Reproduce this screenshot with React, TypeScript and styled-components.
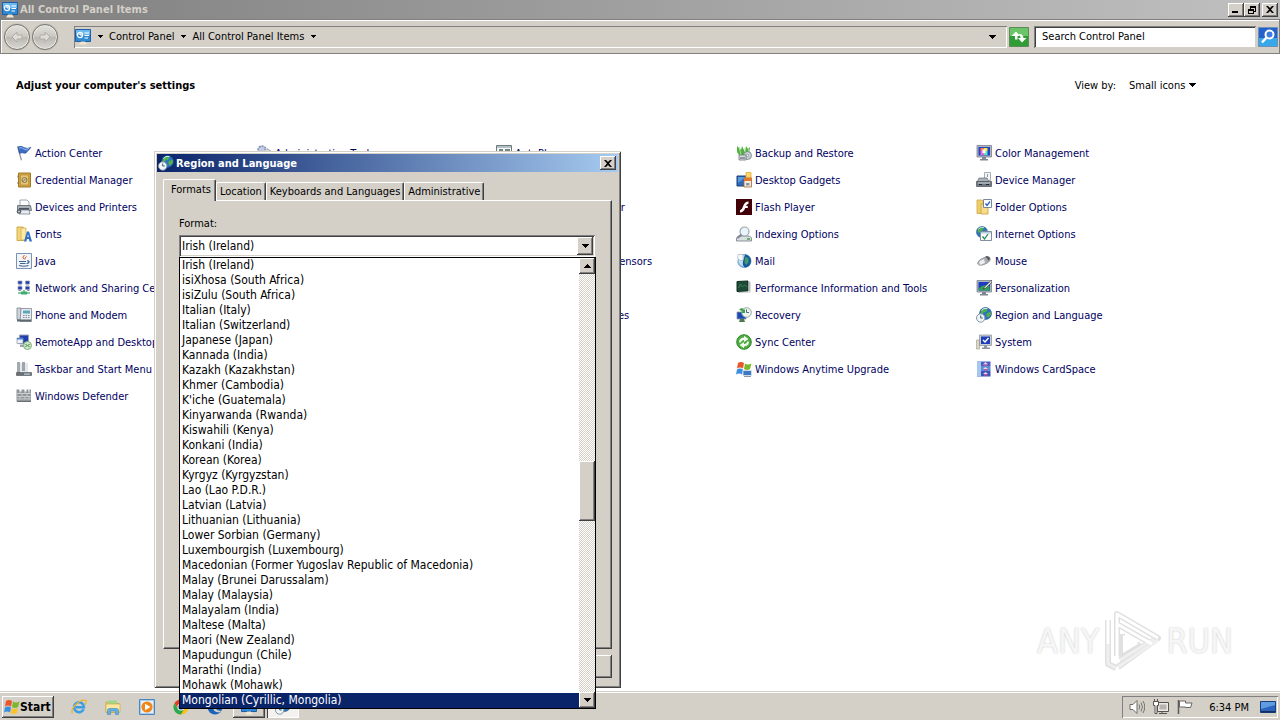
import React from "react";
import styled, { createGlobalStyle, css } from "styled-components";

const face = "#d4d0c8";
const link = "#00005f";
const sans = `"DejaVu Sans Condensed", "Noto Sans", sans-serif`;

const raised = css`
  background: ${face};
  border: 0;
  box-shadow: inset -1px -1px #404040, inset 1px 1px #fff, inset -2px -2px #808080;
`;
const sunken = css`
  box-shadow: inset 1px 1px #808080, inset -1px -1px #fff;
`;

const GlobalStyle = createGlobalStyle`
  *, *::before, *::after { box-sizing: border-box; }
  body { margin: 0; overflow: hidden; background: #fff; }
  body, button, input, select { font: 11px/15px ${sans}; color: #000; }
  svg { display: block; flex: none; }
  ul, h1, h2 { margin: 0; padding: 0; list-style: none; }
`;

const Desktop = styled.div`
  position: relative;
  display: flex;
  flex-direction: column;
  min-height: 100vh;
`;

const Window = styled.main`
  flex: 1;
  display: flex;
  flex-direction: column;
`;

const TitleBar = styled.header<{ $active?: boolean }>`
  display: flex;
  align-items: center;
  gap: 2px;
  height: ${(p) => (p.$active ? 18 : 19)}px;
  padding: ${(p) => (p.$active ? "0 2px 0 1px" : "0 2px")};
  color: ${(p) => (p.$active ? "#fff" : face)};
  background: ${(p) =>
    p.$active
      ? "linear-gradient(90deg, #0a246a, #a6caf0)"
      : "linear-gradient(90deg, #808080, #c0c0c0)"};
`;

const Title = styled.h1`
  flex: 1;
  font: bold 11px/15px ${sans};
`;

const CaptionButton = styled.button<{ $gap?: boolean }>`
  ${raised}
  display: grid;
  place-items: center;
  width: 16px;
  height: 14px;
  padding: 0;
  margin-left: ${(p) => (p.$gap ? 0 : -2)}px;
`;

const ToolBar = styled.nav`
  display: flex;
  align-items: center;
  height: 35px;
  padding: 0 1px 0 3px;
  background: ${face};
  border: 1px solid #808080;
  box-shadow: inset 1px 1px #fff;
`;

const RoundButton = styled.button`
  display: grid;
  place-items: center;
  width: 26px;
  height: 26px;
  margin-right: 2px;
  padding: 0;
  border: 1px solid #77746e;
  border-radius: 50%;
  background: linear-gradient(#e4e2de, #c9c6c0 50%, #bab7b1 52%, #dad8d4);
  box-shadow: inset 0 0 0 1px #eceae6, 0 0 1px #8a8781;
`;

const AddressBar = styled.div`
  ${sunken}
  flex: 1;
  display: flex;
  align-items: center;
  height: 22px;
  margin: 0 2px 0 14px;
  padding: 0 6px 0 1px;
`;

const Crumb = styled.button`
  padding: 0;
  border: 0;
  background: none;
`;

const CrumbArrow = styled.span`
  display: grid;
  place-items: center;
  width: 18px;
`;

const Spacer = styled.span`
  flex: 1;
`;

const IconButton = styled.button`
  width: 20px;
  height: 20px;
  padding: 0;
  border: 0;
  background: none;
`;

const SearchInput = styled.input`
  width: 222px;
  height: 22px;
  margin: 0 2px 0 5px;
  padding: 0 8px;
  border: 0;
  outline: 0;
  border-radius: 0;
  background: #fff;
  box-shadow: inset 1px 1px #808080, inset -1px -1px #d4d0c8, inset 2px 2px #404040;
  &::placeholder { color: #000; opacity: 1; }
`;

const Content = styled.section`
  flex: 1;
  padding: 23px 0 0 16px;
  background: #fff;
`;

const ContentHeader = styled.div`
  display: flex;
  align-items: center;
  height: 16px;
  margin-bottom: 47px;
  padding-right: 84px;
`;

const Heading = styled.h2`
  flex: 1;
  font: bold 11px/15px ${sans};
`;

const ViewBy = styled.label`
  display: flex;
  align-items: center;
  gap: 13px;
`;

const ViewPicker = styled.span`
  display: flex;
  align-items: center;
`;

const ViewSelect = styled.select`
  appearance: none;
  width: 60px;
  padding: 0;
  border: 0;
  background: none;
`;

const ItemGrid = styled.ul`
  display: grid;
  grid-template-columns: repeat(auto-fill, 240px);
  grid-auto-rows: 27px;
`;

const ItemLink = styled.a`
  display: inline-flex;
  align-items: center;
  gap: 3px;
  height: 27px;
  padding-bottom: 1px;
  color: ${link};
  text-decoration: none;
  white-space: nowrap;
`;

const Dialog = styled.section`
  position: absolute;
  left: 154px;
  top: 151px;
  display: flex;
  flex-direction: column;
  width: 467px;
  height: 537px;
  padding: 3px;
  background: ${face};
  box-shadow: inset 1px 1px #d4d0c8, inset -1px -1px #404040, inset 2px 2px #fff,
    inset -2px -2px #808080;
`;

const DialogBody = styled.div`
  flex: 1;
  display: flex;
  flex-direction: column;
  padding: 7px 6px 7px 6px;
`;

const TabRow = styled.div`
  display: flex;
  align-items: flex-end;
  height: 21px;
`;

const Tab = styled.button<{ $selected?: boolean }>`
  position: relative;
  height: ${(p) => (p.$selected ? 22 : 18)}px;
  padding: ${(p) => (p.$selected ? "0 4px 2px 7px" : "0 3px")};
  border: solid;
  border-width: 1px 1px 0 1px;
  border-color: #fff #404040 #fff #fff;
  border-radius: 2px 2px 0 0;
  background: ${face};
  margin-bottom: ${(p) => (p.$selected ? -1 : 0)}px;
  box-shadow: inset -1px 0 #808080;
  z-index: ${(p) => (p.$selected ? 1 : 0)};
  white-space: nowrap;
`;

const TabPanel = styled.div`
  flex: 1;
  padding: 15px 16px 15px 15px;
  border: solid;
  border-width: 1px;
  border-color: #fff #404040 #404040 #fff;
  box-shadow: inset -1px -1px #808080;
`;

const FieldLabel = styled.label`
  display: block;
  margin-bottom: 4px;
`;

const Combo = styled.div`
  position: relative;
  display: flex;
  align-items: center;
  height: 22px;
  padding: 2px;
  background: #fff;
  box-shadow: inset 1px 1px #808080, inset -1px -1px #fff, inset 2px 2px #404040,
    inset -2px -2px #d4d0c8;
`;

const ComboSelect = styled.select`
  appearance: none;
  flex: 1;
  height: 18px;
  padding: 0 1px;
  border: 0;
  outline: 0;
  background: #fff;
  font-size: 12px;
`;

const ArrowButton = styled.button<{ $h?: number }>`
  ${raised}
  display: grid;
  place-items: center;
  flex: none;
  width: 16px;
  height: ${(p) => p.$h ?? 16}px;
  padding: 0;
`;

const DropList = styled.div`
  position: absolute;
  top: 22px;
  left: 0;
  right: -1px;
  display: flex;
  border: 1px solid #000;
  background: #fff;
  z-index: 2;
`;

const Options = styled.ul`
  flex: 1;
  font-size: 12px;
`;

const Option = styled.li<{ $selected?: boolean }>`
  height: 15px;
  padding-left: 2px;
  white-space: nowrap;
  color: ${(p) => (p.$selected ? "#fff" : "#000")};
  background: ${(p) => (p.$selected ? "#0a246a" : "transparent")};
`;

const ScrollTrack = styled.div`
  display: flex;
  flex-direction: column;
  width: 16px;
  background: repeating-conic-gradient(#fff 0 25%, #d4d0c8 0 50%) 0 0 / 2px 2px;
`;

const TrackSpace = styled.div<{ $grow: number }>`
  flex: ${(p) => p.$grow} 0 0;
`;

const ScrollThumb = styled.div`
  ${raised}
  height: 60px;
`;

const DialogButtons = styled.div`
  display: flex;
  justify-content: flex-end;
  gap: 6px;
  margin-top: 6px;
`;

const DialogButton = styled.button`
  ${raised}
  width: 75px;
  height: 23px;
`;

const TaskBar = styled.footer`
  display: flex;
  align-items: center;
  height: 28px;
  padding: 1px 2px 0;
  background: ${face};
  border-top: 1px solid #fff;
  box-shadow: 0 -1px ${face};
`;

const StartButton = styled.button`
  ${raised}
  display: flex;
  align-items: center;
  width: 52px;
  height: 22px;
  padding: 0 2px;
  font: bold 12px/15px ${sans};
`;

const QuickLaunch = styled.div`
  display: flex;
  gap: 18px;
  margin: 0 10px 0 17px;
`;

const LaunchButton = styled.button`
  width: 16px;
  height: 16px;
  padding: 0;
  border: 0;
  background: none;
`;

const TaskButton = styled.button<{ $pressed?: boolean }>`
  ${raised}
  display: grid;
  place-items: center;
  width: 32px;
  height: 22px;
  margin-right: 2px;
  padding: 0;
  ${(p) =>
    p.$pressed &&
    css`
      background: #f4f2ee;
      box-shadow: inset 1px 1px #404040, inset -1px -1px #fff;
    `}
`;

const Tray = styled.div`
  ${sunken}
  display: flex;
  align-items: center;
  gap: 8px;
  height: 22px;
  padding: 0 2px 0 7px;
`;

const Clock = styled.time`
  margin: 0 3px 0 8px;
`;

const Watermark = styled.div`
  position: absolute;
  right: 47px;
  bottom: 48px;
  display: flex;
  align-items: center;
  gap: 5px;
  height: 62px;
  font: 34px/62px ${sans};
  color: #f6f6f6;
  text-shadow: 0 0 2px #c4c4c4;
  pointer-events: none;
`;

const Down = ({ small }: { small?: boolean }) =>
  small ? (
    <svg width="5" height="3" viewBox="0 0 5 3" shapeRendering="crispEdges">
      <path d="M0 0h5v1H0zM1 1h3v1H1zM2 2h1v1H2z" />
    </svg>
  ) : (
    <svg width="7" height="4" viewBox="0 0 7 4" shapeRendering="crispEdges">
      <path d="M0 0h7v1H0zM1 1h5v1H1zM2 2h3v1H2zM3 3h1v1H3z" />
    </svg>
  );
const Up = () => (
  <svg width="7" height="4" viewBox="0 0 7 4" shapeRendering="crispEdges">
    <path d="M0 3h7v1H0zM1 2h5v1H1zM2 1h3v1H2zM3 0h1v1H3z" />
  </svg>
);
const CloseMark = () => (
  <svg width="8" height="7" viewBox="0 0 8 7">
    <path d="M0 0h2l2 2 2-2h2L5 3.500 8 7H6L4 5 2 7H0l3-3.500z" />
  </svg>
);

const Globe = ({ x = 8, y = 8, r = 6 }: { x?: number; y?: number; r?: number }) => (
  <g transform={`translate(${x} ${y}) scale(${r / 6})`}>
    <circle r="6" fill="#2a74c0" stroke="#17477e" strokeWidth=".6" />
    <path d="M-4-4Q-1-6 2-5L1-2-2-1-3 1-5 0zM1 0l4-2 .5 3L3 4 1 3z" fill="#54b04c" />
    <path d="M-4-3Q-2-6 2-5" stroke="#c6e6fa" fill="none" />
  </g>
);
const Monitor = ({ fill = "#1c48b8", children }: { fill?: string; children?: React.ReactNode }) => (
  <>
    <path d="M1 .5h14.500v11.500H1z" fill="#aeb6bf" stroke="#79828d" strokeWidth=".8" />
    <path d="M2.500 2h11.500v8.500H2.500z" fill={fill} />
    {children}
    <path d="M6 12h4v2h2v1.500H4V14h2z" fill="#7f8891" />
  </>
);
const MiniClock = ({ x, y }: { x: number; y: number }) => (
  <g transform={`translate(${x} ${y})`}>
    <circle r="4.200" fill="#f1f5f8" stroke="#8395a8" />
    <path d="M0-2.500V0h2" fill="none" stroke="#3a5878" />
  </g>
);
const FlagPanes = () => (
  <>
    <path d="M2 2q3-2 6 0L7 7.500Q4 5.500 1 7.500z" fill="#e8562a" />
    <path d="M9 2.500q3 2 6.500 0L14 8q-3 2-6 0z" fill="#7cb82f" />
    <path d="M1 8.500q3-2 6 0L6 13.500Q3 11.500 0 13.500z" fill="#3a8ee0" />
    <path d="M8 9q3 2 6 0l-1 5q-3 2-6.500 0z" fill="#f8c32c" />
  </>
);

const art: Record<string, React.ReactNode> = {
  panel: (
    <>
      <path d="M.5.500h15v12H.5z" fill="#2f8ad6" stroke="#1d5fa6" />
      <path d="M1 1h14v5H1z" fill="#6db8ee" />
      <circle cx="5" cy="6" r="2.600" fill="none" stroke="#fff" strokeWidth="1.200" />
      <path d="M5 3.500V6h2.500M9.500 4H14M9.500 6.500H14M9.500 9H13" stroke="#fff" fill="none" />
      <path d="M6 12.500h4l2 3H4z" fill="#f0e6cf" />
    </>
  ),
  flag: (
    <>
      <path d="M1 1.500l1.300-.5L6 15l-1.200.4z" fill="#8d97a5" />
      <path d="M2 2q3-1.500 6 .5t7-.3q-2 3-3.500 3.800Q10 9 8.500 8.200 5.500 7 3.500 8.500z" fill="#3c6cc4" stroke="#1f4896" strokeWidth=".6" />
      <path d="M3 3q3-1 5 1t5-.7" stroke="#8fb8f0" fill="none" />
    </>
  ),
  safe: (
    <>
      <path d="M2.500 1h12v14h-12z" fill="#d0a03c" stroke="#a07c2c" />
      <path d="M4.500 3h8v10h-8z" fill="#e4c878" stroke="#b48c34" strokeWidth=".7" />
      <circle cx="8.500" cy="8" r="2.500" fill="#d8ceac" stroke="#8b7434" />
      <path d="M7 9.500L10 6.500" stroke="#776638" />
      <path d="M2 3.500v2M2 10v2" stroke="#77715f" />
    </>
  ),
  printer: (
    <>
      <path d="M4 1h7l2 2v5H4z" fill="#fff" stroke="#8490a0" strokeWidth=".8" />
      <path d="M1.500 6.500h13l1 5h-14z" fill="#a9afb6" stroke="#5c636c" strokeWidth=".8" />
      <path d="M3 9h10v2H3z" fill="#4d545e" />
      <path d="M4 11h9l1 4H3z" fill="#e8edf2" stroke="#7a838e" strokeWidth=".8" />
      <circle cx="3" cy="12.500" r="2.300" fill="#555d66" />
      <circle cx="3" cy="12.500" r="1" fill="#c5ccd4" />
    </>
  ),
  fonts: (
    <>
      <path d="M1 1h6l1 1.500v12H1z" fill="#f3d777" stroke="#c49b35" strokeWidth=".8" />
      <path d="M5 2h5v12H5z" fill="#fbe9a6" stroke="#d0a843" strokeWidth=".7" />
      <path d="M11 5.500h2l3 10h-2.500l-.6-2.500h-2l-.6 2.500H8z" fill="#2b6fcb" />
      <path d="M12 8l.7 3h-1.400z" fill="#fff" />
    </>
  ),
  java: (
    <>
      <path d="M.5.500h15v15H.5z" fill="#f2f4f7" stroke="#7b93b1" />
      <path d="M8.500 2q-3 2.200-.6 4.200M10.500 3.500Q8 5 9 6.500" stroke="#d8642a" fill="none" />
      <path d="M3 8.500h7M4 10.500h5.500M11 8q2.500-.5 2 1t-2.500 1.500M3 12.500q5 1.500 9.500 0" stroke="#3d6592" fill="none" strokeWidth="1.200" />
    </>
  ),
  network: (
    <>
      <g fill="#243caa" stroke="#8c98bc" strokeWidth=".7">
        <path d="M2 1h4v3H2zM9.500 1h4v3h-4zM2 6.500h4v3H2zM9.500 6.500h4v3h-4z" />
      </g>
      <path d="M2.500 5h3M10 5h3M2.500 10.500H5M11 10.500h2.500" stroke="#9097a5" />
      <path d="M7 10h2v2h5v2H2v-2h5z" fill="#8cc8a8" />
      <path d="M5 11.500h6v3H5z" fill="#3cae6c" />
    </>
  ),
  phone: (
    <>
      <path d="M1 1h4v11.500H1z" fill="#ced5dc" stroke="#7c8791" strokeWidth=".8" />
      <path d="M5 1.500h10.500v13H4z" fill="#e7ebef" stroke="#7c8791" strokeWidth=".8" />
      <path d="M7 3.500h7v3H7z" fill="#5da7be" />
      <path d="M7 8.500h7M7 10.500h7" stroke="#85909c" strokeDasharray="1.500 1" />
      <path d="M1 13.500h14" stroke="#5f6871" strokeWidth="2" />
    </>
  ),
  remote: (
    <>
      <path d="M3.500 1h9v9h-9z" fill="#1f3fae" stroke="#9ba5b8" />
      <path d="M1 4h6v5.500H1z" fill="#eef2f6" stroke="#8b94a0" strokeWidth=".7" />
      <path d="M1 4h6v1.500H1z" fill="#4f7fd0" />
      <path d="M4 11h5v2H4z" fill="#9aa2ac" />
      <circle cx="11.500" cy="11.500" r="4" fill="#cfe6ca" stroke="#7fae78" />
      <path d="M9.500 10l1.500 1.500L9.500 13M13.500 10L12 11.500l1.500 1.500" stroke="#2f7f2a" fill="none" />
    </>
  ),
  taskbar: (
    <>
      <path d="M1 1h3v11H1z" fill="#a4a9ad" />
      <path d="M4 2h8v9H4z" fill="#e5e8ea" />
      <path d="M6 1h3v9H6z" fill="#9fa5aa" />
      <path d="M.5 11.500h15v3H.5z" fill="#696f75" stroke="#4c5157" strokeWidth=".6" />
      <path d="M8 12.500h6v1.200H8z" fill="#bcd3e4" />
    </>
  ),
  wall: (
    <>
      <path d="M.5 1.500h3v2h2v-2h3v2h2v-2h2v2h1v-2H15v12H.5z" fill="#909598" />
      <path d="M1 5.500h14M1 8.500h14M1 11h14M4 3v2.500M9 3v2.500M13 3v2.500M6 5.500v3M11 5.500v3M4 8.500V11M9 8.500V11M13 8.500V11" stroke="#d6d9db" strokeWidth=".8" />
      <path d="M1 13.500h14" stroke="#6b6f72" />
    </>
  ),
  tools: (
    <>
      <circle cx="6" cy="5" r="4" fill="#c1cbe4" stroke="#7c8ab0" strokeDasharray="2 1" strokeWidth="1.500" />
      <circle cx="11" cy="8" r="4" fill="#d4d8e0" stroke="#7f8694" strokeDasharray="2 1" />
    </>
  ),
  autoplay: (
    <>
      <path d="M.5.500h15v13H.5z" fill="#f6f7f8" stroke="#6f7a80" />
      <path d="M1 1h14v2H1z" fill="#b7c2c6" />
      <path d="M3 5h4M9 5h5M3 8h4" stroke="#47615c" strokeWidth="1.500" />
    </>
  ),
  backup: (
    <>
      <path d="M1 1l4 4 1-4 3 6 1-6 2 3 2-2-1 8-8 3-4-6z" fill="#52b045" />
      <path d="M3 2l2 8M9 3v7M13 4l-2 6" stroke="#a5e28d" />
      <circle cx="11.500" cy="10.500" r="4" fill="#c8d2d6" stroke="#5f6b70" strokeWidth=".7" />
      <circle cx="11.500" cy="10.500" r="1.200" fill="#fff" stroke="#6a7479" strokeWidth=".6" />
      <path d="M3 10h7v5H3z" fill="#d9dde0" stroke="#6c767c" strokeWidth=".8" />
      <path d="M4 13h5" stroke="#47515a" />
    </>
  ),
  gadgets: (
    <>
      <path d="M1 4h10v10H1z" fill="#2e68b6" stroke="#163f7c" />
      <path d="M2 5h8L2 11z" fill="#5b9ce0" />
      <path d="M10 .500h5v6h-5z" fill="#ffd566" stroke="#e0a83c" strokeWidth=".8" />
      <path d="M8 6h7.500v9H8z" fill="#f3eadf" stroke="#a8642d" strokeWidth=".8" />
      <path d="M8 6h7.500v3H8z" fill="#e07930" />
      <path d="M10 11h3.500v2.500H10z" fill="#8895a4" />
    </>
  ),
  flash: (
    <>
      <path d="M0 0h16v16H0z" fill="#420008" />
      <path d="M12.500 2.500v2.300Q10.700 5 10 7h1.800v2H9.200Q7.700 13.300 4 13.500v-2.300q2-.4 3-3.700Q8.500 2.600 12.500 2.500z" fill="#fff" />
    </>
  ),
  indexing: (
    <>
      <path d="M2.500 10h11l2 2v3H.5v-3z" fill="#dadfe3" stroke="#6e7880" strokeWidth=".8" />
      <path d="M11 13h3" stroke="#3ea544" strokeWidth="1.500" />
      <circle cx="8.500" cy="5.500" r="4.500" fill="#eaf4fa" stroke="#9aa5ae" strokeWidth="1.200" />
      <path d="M5.500 8.500L1.500 12" stroke="#7a858e" strokeWidth="2" />
    </>
  ),
  mail: (
    <>
      <circle cx="8.500" cy="8" r="6.500" fill="#c4dff2" stroke="#6fa3cc" />
      <path d="M9 1.500q6 1 6 6.500t-6 6.500q-3-2-2-6t2-7z" fill="#17599a" />
      <path d="M9 4l3.500 1v4l-2 3-2-2z" fill="#3e9d6e" />
      <path d="M2 1.500h5v6H4L1.500 5z" fill="#f6f9fb" stroke="#a4b5c4" strokeWidth=".7" />
      <path d="M2 9q1 4 5 5" stroke="#7db3dc" fill="none" strokeWidth="1.500" />
    </>
  ),
  performance: (
    <>
      <path d="M1 1.500l11-.5v10L1 11.500z" fill="#1d4a34" stroke="#0f2e20" />
      <path d="M2.500 8l2-4 2 3 2-2 3 2" stroke="#3c7d52" fill="none" />
      <path d="M12.500 1l2 1v10l-2-1z" fill="#b5bcb9" />
      <path d="M2 12.500l12-.5" stroke="#c5cbc8" />
    </>
  ),
  recovery: (
    <>
      <path d="M1 5h9v7H1z" fill="#1b49b4" stroke="#8b98b4" strokeWidth=".8" />
      <path d="M4 12h4l1 3H3z" fill="#4d7a4a" />
      <circle cx="10.500" cy="5.500" r="4.800" fill="#eef6ee" stroke="#91a49c" />
      <path d="M10.500 2.500v3h2.500" stroke="#4b6a86" fill="none" />
      <path d="M5 1q2 0 3 2l1-1v4H5l1.500-1.500Q5.500 3 3 3z" fill="#3da24b" />
    </>
  ),
  sync: (
    <>
      <circle cx="8" cy="8" r="7.300" fill="#4dab42" stroke="#2f8a2c" />
      <path d="M3 8.500q0-4.500 5-5V1.800L12.500 5 8 8V6Q5 6.500 5 8.500z" fill="#f2fbee" />
      <path d="M13 7.500q0 4.500-5 5v1.700L3.500 11 8 8v2q3-.5 3-2.500z" fill="#f2fbee" />
    </>
  ),
  upgrade: (
    <>
      <FlagPanes />
      <path d="M7 9.500h8.500v5H7z" fill="#3d78c8" stroke="#dbe5ee" strokeWidth=".8" />
      <path d="M8 15.500h7" stroke="#8c97a4" />
    </>
  ),
  color: (
    <Monitor fill="#2443c2">
      <path d="M4.500 3H8v3H4.500z" fill="#ff7a60" />
      <path d="M8 3h3.500v3H8z" fill="#f4e840" />
      <path d="M4.500 6H8v4H4.500z" fill="#e868e0" />
      <path d="M8 6h3.500v4H8z" fill="#5be8c0" />
      <path d="M6.500 4.500h3v3.500h-3z" fill="#fff" />
    </Monitor>
  ),
  device: (
    <>
      <path d="M8.500.500h6v8h-6z" fill="#f5f6f7" stroke="#a6adb2" />
      <path d="M11.500 2v3" stroke="#8e969c" />
      <path d="M3 6h8l2 4H1z" fill="#aab1b8" stroke="#656d75" strokeWidth=".7" />
      <path d="M.5 9.500h15v5H.5z" fill="#6e777f" stroke="#4c545b" strokeWidth=".7" />
      <path d="M2 11h12" stroke="#d3d9de" />
      <path d="M3 12.500h3M10 12.500h3" stroke="#20272d" />
    </>
  ),
  folder: (
    <>
      <path d="M1 1h5l1 1.500v12H1z" fill="#f0cf68" stroke="#cda64a" strokeWidth=".8" />
      <path d="M5 5h7v10H5z" fill="#f6dc8c" stroke="#caa03b" strokeWidth=".8" />
      <path d="M7.500.500h8v8h-8z" fill="#fff" stroke="#75889e" />
      <path d="M9.500 4.500l1.500 2 3-4" stroke="#2463c0" strokeWidth="1.300" fill="none" />
    </>
  ),
  internet: (
    <>
      <Globe x={6} y={6} r={5.500} />
      <path d="M4.500 5.500h11v9h-11z" fill="#f8fafb" stroke="#7e909f" />
      <path d="M5 6h10v1.500H5z" fill="#b8ccdc" />
      <path d="M6.500 10.500l2 2.500 3.500-5" stroke="#278a55" strokeWidth="1.300" fill="none" />
    </>
  ),
  mouse: (
    <>
      <path d="M1.500 10.500q.5-3 4.500-5l5-2q4 0 3 4-2 3-6 4-5 2-6.500-1z" fill="#a9adb2" stroke="#8c9196" strokeWidth=".8" />
      <path d="M3 9q2-2 5-3l1 4-5 2z" fill="#eceef0" />
      <path d="M9 4q3 1 3 4l2-2q0-2-3-3z" fill="#555b61" />
    </>
  ),
  personalize: (
    <Monitor fill="#1d3cc0">
      <path d="M3 8q4-4 10.500-2v4.500H3z" fill="#30a054" />
      <path d="M15.500 0L9 6.500 7 9l3-1L16 2z" fill="#e7e7e7" stroke="#333" strokeWidth=".6" />
    </Monitor>
  ),
  region: (
    <>
      <Globe x={9.500} y={6.500} r={6} />
      <MiniClock x={4.700} y={11} />
    </>
  ),
  system: (
    <>
      <path d="M.5 6h3v9h-3z" fill="#dcd7c5" stroke="#aaa593" strokeWidth=".7" />
      <path d="M3.500 1h12v10.500h-12z" fill="#c9ced5" stroke="#868e98" strokeWidth=".7" />
      <path d="M5 2.500h9V10H5z" fill="#1d3fb8" />
      <path d="M7 6l2 2L12.500 4" stroke="#fff" strokeWidth="1.400" fill="none" />
      <path d="M8 11.500h3v2h3V15H6v-1.500h2z" fill="#8d959e" />
    </>
  ),
  card: (
    <>
      <path d="M1 .500h13.500V5H1z" fill="#4b5ec4" />
      <path d="M1 5h13.500v5H1z" fill="#5a8fd8" />
      <path d="M1 10h13.500v5.500H1z" fill="#3d55b6" />
      <path d="M1 .500h4v15H1z" fill="#a7c7ef" />
      <path d="M7 3.500L9.500 1 12 3.500zM7 8l2.500-2L12 8zM7 13l2.500-2 2.500 2z" fill="#f2d5ec" />
      <path d="M8 3.500h3.500V5H8zM8 8h3.500v1.500H8zM8 13h3.500v1.500H8z" fill="#b65a9c" />
    </>
  ),
  ie: (
    <>
      <path d="M12.600 10.200A5 5 0 1 1 13 8.300H4.500" fill="none" stroke="#3a9ee6" strokeWidth="2.500" />
      <path d="M1.500 14.500Q-.5 11 5 5.500T15 1.500Q16 3 14 5.500" fill="none" stroke="#efb52b" strokeWidth="1.300" />
    </>
  ),
  explorer: (
    <>
      <path d="M1 3h5l1 1.500h7v9H1z" fill="#f0cf6a" stroke="#c49b38" strokeWidth=".7" />
      <path d="M3 1.500h9v5H3z" fill="#9fd68a" />
      <path d="M1 5h14v8H1z" fill="#fae7a2" stroke="#d0aa48" strokeWidth=".7" />
      <path d="M2.500 15.500v-4q0-2 2-2h7q2 0 2 2v4h-3V12h-5v3.500z" fill="#63b0e4" stroke="#3d86c2" strokeWidth=".6" />
    </>
  ),
  wmp: (
    <>
      <path d="M.5.500h15v15H.5z" fill="#a9cdee" stroke="#4a86c0" />
      <path d="M2 2h12v12H2z" fill="#e8f1f9" />
      <circle cx="8" cy="8" r="5.600" fill="#f08818" />
      <path d="M6 4.800L11.500 8 6 11.200z" fill="#fff" />
    </>
  ),
  chrome: (
    <>
      <circle cx="8" cy="8" r="7.500" fill="#fbc116" />
      <path d="M1.500 4.200A7.500 7.500 0 0 1 14.500 4.200H8L5 9.500z" fill="#e33b2e" />
      <path d="M1.500 4.200A7.500 7.500 0 0 0 8 15.500l3.200-5.700-6.200 0z" fill="#2da94f" />
      <circle cx="8" cy="8" r="3.600" fill="#fff" />
      <circle cx="8" cy="8" r="2.800" fill="#4285f4" />
    </>
  ),
  edge: (
    <>
      <circle cx="8" cy="8" r="7.500" fill="#1b62b8" />
      <path d="M1 7Q3 1 8 .8q6 .2 7.200 6.500Q14 4 9 4 3 4 1 7z" fill="#3cc6a8" />
      <path d="M6 8q0 5 6 5.500l3-2q-6 1-6-3z" fill="#d4d0c8" />
    </>
  ),
  windows: <FlagPanes />,
  speaker: (
    <>
      <path d="M1 5.500h3L8 1.500v13L4 10.500H1z" fill="#fff" stroke="#6e6c67" />
      <path d="M10 5.500q1.500 2.500 0 5M12 3.500q3 4.500 0 9M14 2q3.500 6 0 12" fill="none" stroke="#777570" />
    </>
  ),
  net: (
    <>
      <path d="M4.500 3.500h11v9h-11z" fill="#eceae6" stroke="#55534f" />
      <path d="M6.500 5.500h7v5h-7z" fill="#b5b3ae" />
      <path d="M9 13v1.500H6M9 14.500h5" stroke="#55534f" fill="none" />
      <path d="M.5 2.500h5v4H4v8H2v-8H.5zM1.500 0v3M4.500 0v3" fill="#fff" stroke="#55534f" />
    </>
  ),
  trayflag: (
    <>
      <path d="M1.500 1v14" stroke="#5c5a56" strokeWidth="1.500" />
      <path d="M2.500 2h6v2h6.500l-1.500 4.500H8.500V8h-6z" fill="#fff" stroke="#5c5a56" strokeWidth=".9" />
    </>
  ),
  desktop: (
    <>
      <path d="M.5 2.500h15v11H.5z" fill="#2c63bd" stroke="#17407e" />
      <path d="M1 3h14v3L1 10z" fill="#5f9de0" />
      <path d="M1 12h14v1.500H1z" fill="#12305f" />
    </>
  ),
};

const Icon = ({ name }: { name: string }) => (
  <svg width="16" height="16" viewBox="0 0 16 16" aria-hidden="true">
    {art[name]}
  </svg>
);

const items: [string, string][] = [
  ["Action Center", "flag"],
  ["Administrative Tools", "tools"],
  ["AutoPlay", "autoplay"],
  ["Backup and Restore", "backup"],
  ["Color Management", "color"],
  ["Credential Manager", "safe"],
  ["Date and Time", "region"],
  ["Default Programs", "sync"],
  ["Desktop Gadgets", "gadgets"],
  ["Device Manager", "device"],
  ["Devices and Printers", "printer"],
  ["Display", "color"],
  ["Ease of Access Center", "sync"],
  ["Flash Player", "flash"],
  ["Folder Options", "folder"],
  ["Fonts", "fonts"],
  ["Getting Started", "panel"],
  ["HomeGroup", "sync"],
  ["Indexing Options", "indexing"],
  ["Internet Options", "internet"],
  ["Java", "java"],
  ["Keyboard", "phone"],
  ["Location and Other Sensors", "region"],
  ["Mail", "mail"],
  ["Mouse", "mouse"],
  ["Network and Sharing Center", "network"],
  ["Notification Area Icons", "taskbar"],
  ["Parental Controls", "panel"],
  ["Performance Information and Tools", "performance"],
  ["Personalization", "personalize"],
  ["Phone and Modem", "phone"],
  ["Power Options", "panel"],
  ["Programs and Features", "panel"],
  ["Recovery", "recovery"],
  ["Region and Language", "region"],
  ["RemoteApp and Desktop Co...", "remote"],
  ["Sound", "speaker"],
  ["Speech Recognition", "speaker"],
  ["Sync Center", "sync"],
  ["System", "system"],
  ["Taskbar and Start Menu", "taskbar"],
  ["Troubleshooting", "panel"],
  ["User Accounts", "panel"],
  ["Windows Anytime Upgrade", "upgrade"],
  ["Windows CardSpace", "card"],
  ["Windows Defender", "wall"],
  ["Windows Firewall", "wall"],
  ["Windows Update", "upgrade"],
];

const formats = [
  "Irish (Ireland)",
  "isiXhosa (South Africa)",
  "isiZulu (South Africa)",
  "Italian (Italy)",
  "Italian (Switzerland)",
  "Japanese (Japan)",
  "Kannada (India)",
  "Kazakh (Kazakhstan)",
  "Khmer (Cambodia)",
  "K'iche (Guatemala)",
  "Kinyarwanda (Rwanda)",
  "Kiswahili (Kenya)",
  "Konkani (India)",
  "Korean (Korea)",
  "Kyrgyz (Kyrgyzstan)",
  "Lao (Lao P.D.R.)",
  "Latvian (Latvia)",
  "Lithuanian (Lithuania)",
  "Lower Sorbian (Germany)",
  "Luxembourgish (Luxembourg)",
  "Macedonian (Former Yugoslav Republic of Macedonia)",
  "Malay (Brunei Darussalam)",
  "Malay (Malaysia)",
  "Malayalam (India)",
  "Maltese (Malta)",
  "Maori (New Zealand)",
  "Mapudungun (Chile)",
  "Marathi (India)",
  "Mohawk (Mohawk)",
  "Mongolian (Cyrillic, Mongolia)",
];

const RegionDialog = () => (
  <Dialog role="dialog" aria-labelledby="region-title">
    <TitleBar $active>
      <Icon name="region" />
      <Title id="region-title">Region and Language</Title>
      <CaptionButton $gap aria-label="Close">
        <CloseMark />
      </CaptionButton>
    </TitleBar>
    <DialogBody>
      <TabRow role="tablist">
        <Tab role="tab" aria-selected $selected>Formats</Tab>
        <Tab role="tab">Location</Tab>
        <Tab role="tab">Keyboards and Languages</Tab>
        <Tab role="tab">Administrative</Tab>
      </TabRow>
      <TabPanel role="tabpanel">
        <FieldLabel htmlFor="format">Format:</FieldLabel>
        <Combo>
          <ComboSelect id="format" defaultValue={formats[0]}>
            {formats.map((f) => (
              <option key={f}>{f}</option>
            ))}
          </ComboSelect>
          <ArrowButton $h={18} aria-label="Show formats">
            <Down />
          </ArrowButton>
          <DropList>
            <Options role="listbox" aria-label="Formats">
              {formats.map((f, i) => (
                <Option
                  key={f}
                  role="option"
                  aria-selected={i === formats.length - 1}
                  $selected={i === formats.length - 1}
                >
                  {f}
                </Option>
              ))}
            </Options>
            <ScrollTrack>
              <ArrowButton aria-label="Scroll up">
                <Up />
              </ArrowButton>
              <TrackSpace $grow={187} />
              <ScrollThumb />
              <TrackSpace $grow={171} />
              <ArrowButton aria-label="Scroll down">
                <Down />
              </ArrowButton>
            </ScrollTrack>
          </DropList>
        </Combo>
      </TabPanel>
      <DialogButtons>
        <DialogButton>OK</DialogButton>
        <DialogButton>Cancel</DialogButton>
        <DialogButton>Apply</DialogButton>
      </DialogButtons>
    </DialogBody>
  </Dialog>
);

export default function App() {
  return (
    <>
      <GlobalStyle />
      <Desktop>
        <Window>
          <TitleBar>
            <Icon name="panel" />
            <Title>All Control Panel Items</Title>
            <CaptionButton $gap aria-label="Minimize">
              <svg width="8" height="7"><path d="M0 5h6v2H0z" /></svg>
            </CaptionButton>
            <CaptionButton aria-label="Restore">
              <svg width="8" height="8" shapeRendering="crispEdges">
                <path d="M2 0h6v6H6V5h1V2H3v1H2zM0 3h6v5H0zM1 5v2h4V5z" fillRule="evenodd" />
              </svg>
            </CaptionButton>
            <CaptionButton $gap aria-label="Close">
              <CloseMark />
            </CaptionButton>
          </TitleBar>
          <ToolBar>
            <RoundButton aria-label="Back">
              <svg width="14" height="14"><path d="M7 2L2 7l5 5V9h5V5H7z" fill="#dedcd8" stroke="#b0ada7" /></svg>
            </RoundButton>
            <RoundButton aria-label="Forward">
              <svg width="14" height="14"><path d="M7 2l5 5-5 5V9H2V5h5z" fill="#dedcd8" stroke="#b0ada7" /></svg>
            </RoundButton>
            <AddressBar>
              <Icon name="panel" />
              <CrumbArrow><Down small /></CrumbArrow>
              <Crumb>Control Panel</Crumb>
              <CrumbArrow><Down small /></CrumbArrow>
              <Crumb>All Control Panel Items</Crumb>
              <CrumbArrow><Down small /></CrumbArrow>
              <Spacer />
              <CrumbArrow><Down /></CrumbArrow>
            </AddressBar>
            <IconButton aria-label="Refresh">
              <svg width="20" height="20">
                <path d="M.5.500h19v19H.5z" fill="#2f9c35" stroke="#5d8a5b" />
                <path d="M1 1h18v8H1z" fill="#6cc468" />
                <path d="M2.500 9L7 4.500l4 4.500H8.500v3.500h-2.500V9z" fill="#fff" />
                <path d="M17.500 11L13 15.500 9 11h2.500q0-3-2-4 4.500-.5 5 4z" fill="#fff" />
              </svg>
            </IconButton>
            <SearchInput type="search" aria-label="Search" placeholder="Search Control Panel" />
            <IconButton aria-label="Search">
              <svg width="20" height="20">
                <path d="M.5.500h19v19H.5z" fill="#2561cc" stroke="#6d8fb8" />
                <path d="M1 11h18v8H1z" fill="#38a8e8" />
                <circle cx="11.500" cy="7.500" r="4" fill="#3c7ce0" stroke="#fff" strokeWidth="2" />
                <path d="M8.500 10.500L4 15.500" stroke="#fff" strokeWidth="2.500" />
              </svg>
            </IconButton>
          </ToolBar>
          <Content>
            <ContentHeader>
              <Heading>Adjust your computer's settings</Heading>
              <ViewBy>
                View by:
                <ViewPicker>
                  <ViewSelect defaultValue="Small icons">
                    <option>Small icons</option>
                  </ViewSelect>
                  <Down />
                </ViewPicker>
              </ViewBy>
            </ContentHeader>
            <ItemGrid>
              {items.map(([label, icon]) => (
                <li key={label}>
                  <ItemLink href="#">
                    <Icon name={icon} />
                    {label}
                  </ItemLink>
                </li>
              ))}
            </ItemGrid>
          </Content>
        </Window>
        <Watermark aria-hidden="true">
          ANY
          <svg width="57" height="62" viewBox="0 0 57 62" fill="none" strokeLinejoin="round">
            <path d="M13 46V4L54 28 14 57M4 10v44l8 4M13 14l35 20M18 24v22l19-12M16 50l34-20" stroke="#e0e0e0" strokeWidth="6" />
            <path d="M14 57L54 30M16 50l34-21M4 34v20l8 4" stroke="#efefef" strokeWidth="3" />
            <path d="M13 46V4L54 28M13 14l35 20M4 34V10" stroke="#fff" strokeWidth="3" />
            <path d="M19 25v18l15-9z" fill="#fff" />
          </svg>
          RUN
        </Watermark>
        <TaskBar>
          <StartButton>
            <Icon name="windows" />
            Start
          </StartButton>
          <QuickLaunch>
            {["ie", "explorer", "wmp", "chrome", "edge"].map((n) => (
              <LaunchButton key={n} aria-label={n}>
                <Icon name={n} />
              </LaunchButton>
            ))}
          </QuickLaunch>
          <TaskButton aria-label="Control Panel"><Icon name="panel" /></TaskButton>
          <TaskButton $pressed aria-label="Region and Language"><Icon name="region" /></TaskButton>
          <Spacer />
          <Tray>
            <Icon name="speaker" />
            <Icon name="net" />
            <Icon name="trayflag" />
            <Clock>6:34 PM</Clock>
            <Icon name="desktop" />
          </Tray>
        </TaskBar>
        <RegionDialog />
      </Desktop>
    </>
  );
}
